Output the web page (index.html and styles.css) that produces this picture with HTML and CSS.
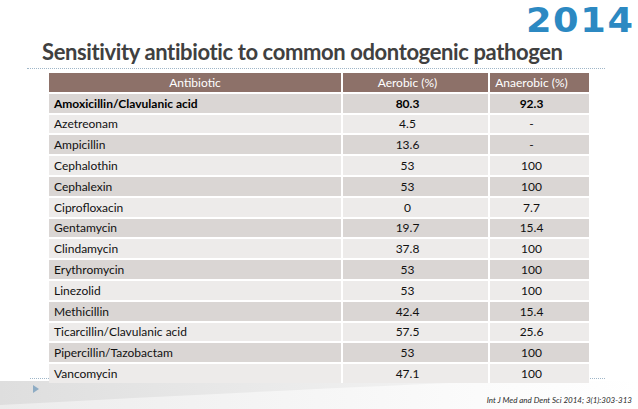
FILE: index.html
```html
<!DOCTYPE html>
<html lang="en">
<head>
<meta charset="utf-8">
<title>Sensitivity antibiotic</title>
<link rel="stylesheet" href="styles.css">
</head>
<body>
<div class="slide">
  <svg class="swoosh" width="638" height="32" viewBox="0 0 638 32" aria-hidden="true">
    <defs>
      <linearGradient id="g1" x1="0" y1="0" x2="1" y2="0">
        <stop offset="0" stop-color="#ececec"/>
        <stop offset="0.75" stop-color="#fbfbfb"/>
        <stop offset="1" stop-color="#ffffff"/>
      </linearGradient>
      <linearGradient id="g2" x1="0" y1="0" x2="1" y2="0">
        <stop offset="0" stop-color="#dedede"/>
        <stop offset="0.8" stop-color="#f0f0f0"/>
        <stop offset="1" stop-color="#f6f6f6"/>
      </linearGradient>
    </defs>
    <rect x="0" y="0" width="638" height="32" fill="url(#g1)"/>
    <path d="M0 0 L500 0 Q 300 8 0 24 Z" fill="url(#g2)"/>
  </svg>
  <div class="rule-bottom"></div>
  <div class="arrow"></div>

  <div class="year"><span class="year-text">2014</span></div>
  <h1 class="title">Sensitivity antibiotic to common odontogenic pathogen</h1>
  <div class="rule"></div>

  <div class="table">
    <div class="cell head">Antibiotic</div>
    <div class="cell head c">Aerobic (%)</div>
    <div class="cell head c">Anaerobic (%)</div>

    <div class="cell dark b">Amoxicillin/Clavulanic acid</div>
    <div class="cell dark b c">80.3</div>
    <div class="cell dark b c">92.3</div>

    <div class="cell light">Azetreonam</div>
    <div class="cell light c">4.5</div>
    <div class="cell light c">-</div>

    <div class="cell dark">Ampicillin</div>
    <div class="cell dark c">13.6</div>
    <div class="cell dark c">-</div>

    <div class="cell light">Cephalothin</div>
    <div class="cell light c">53</div>
    <div class="cell light c">100</div>

    <div class="cell dark">Cephalexin</div>
    <div class="cell dark c">53</div>
    <div class="cell dark c">100</div>

    <div class="cell light">Ciprofloxacin</div>
    <div class="cell light c">0</div>
    <div class="cell light c">7.7</div>

    <div class="cell dark">Gentamycin</div>
    <div class="cell dark c">19.7</div>
    <div class="cell dark c">15.4</div>

    <div class="cell light">Clindamycin</div>
    <div class="cell light c">37.8</div>
    <div class="cell light c">100</div>

    <div class="cell dark">Erythromycin</div>
    <div class="cell dark c">53</div>
    <div class="cell dark c">100</div>

    <div class="cell light">Linezolid</div>
    <div class="cell light c">53</div>
    <div class="cell light c">100</div>

    <div class="cell dark">Methicillin</div>
    <div class="cell dark c">42.4</div>
    <div class="cell dark c">15.4</div>

    <div class="cell light">Ticarcillin/Clavulanic acid</div>
    <div class="cell light c">57.5</div>
    <div class="cell light c">25.6</div>

    <div class="cell dark">Pipercillin/Tazobactam</div>
    <div class="cell dark c">53</div>
    <div class="cell dark c">100</div>

    <div class="cell light">Vancomycin</div>
    <div class="cell light c">47.1</div>
    <div class="cell light c">100</div>
  </div>

  <div class="footer">
    <span class="cite">Int J Med and Dent Sci 2014; 3(1):303-313</span>
  </div>
</div>
</body>
</html>
```

FILE: styles.css
```css
html, body {
  margin: 0;
  padding: 0;
  background: #ffffff;
}

.slide {
  position: relative;
  width: 638px;
  height: 409px;
  overflow: hidden;
  background: #ffffff;
  font-family: Lato, "Open Sans", "Liberation Sans", sans-serif;
}

.swoosh {
  position: absolute;
  left: 0;
  top: 381px;
  display: block;
}

.rule-bottom {
  position: absolute;
  left: 30px;
  top: 378px;
  width: 575px;
  border-top: 1px dotted #9fb6c8;
}

.arrow {
  position: absolute;
  left: 33px;
  top: 385px;
  width: 0;
  height: 0;
  border-top: 4px solid transparent;
  border-bottom: 4px solid transparent;
  border-left: 6px solid #8eacc4;
}

.year {
  position: relative;
  height: 34px;
  display: flex;
  justify-content: flex-end;
  padding-right: 3px;
}

.year-text {
  display: block;
  height: 40px;
  line-height: 40px;
  font-family: "DejaVu Sans", sans-serif;
  font-weight: bold;
  font-size: 34px;
  letter-spacing: 1.5px;
  color: #2c89c2;
  transform: scaleX(1.08);
  transform-origin: right center;
}

.title {
  position: relative;
  margin: 0 0 0 42px;
  padding-top: 5px;
  height: 26px;
  line-height: 26px;
  font-size: 22px;
  font-weight: 700;
  letter-spacing: -0.38px;
  color: #404040;
  white-space: nowrap;
}

.rule {
  position: relative;
  margin: 3px 33px 0 27px;
  border-top: 1px dotted #9fb6c8;
}

.table {
  position: relative;
  margin: 4px 0 0 49px;
  width: 540px;
  height: 310px;
  display: grid;
  grid-template-columns: 292px 145px 99px;
  grid-template-rows: repeat(15, 1fr);
  column-gap: 2px;
  row-gap: 2px;
  background: #ffffff;
}

.cell {
  display: flex;
  align-items: center;
  padding-left: 5px;
  font-size: 12px;
  color: #111111;
  white-space: nowrap;
}

.cell.head {
  background: #8d7169;
  color: #ffffff;
  justify-content: center;
  padding-left: 0;
}

.cell.c {
  justify-content: center;
  padding-left: 0;
  padding-right: 16px;
}

.cell.dark {
  background: #dad6d4;
}

.cell.light {
  background: #edebea;
}

.cell.b {
  font-weight: 700;
  color: #000000;
}

.footer {
  position: relative;
  display: flex;
  justify-content: flex-end;
  margin-top: 11px;
  padding-right: 6px;
}

.cite {
  font-size: 8px;
  line-height: 12px;
  font-style: italic;
  color: #2a2a2a;
}
```
